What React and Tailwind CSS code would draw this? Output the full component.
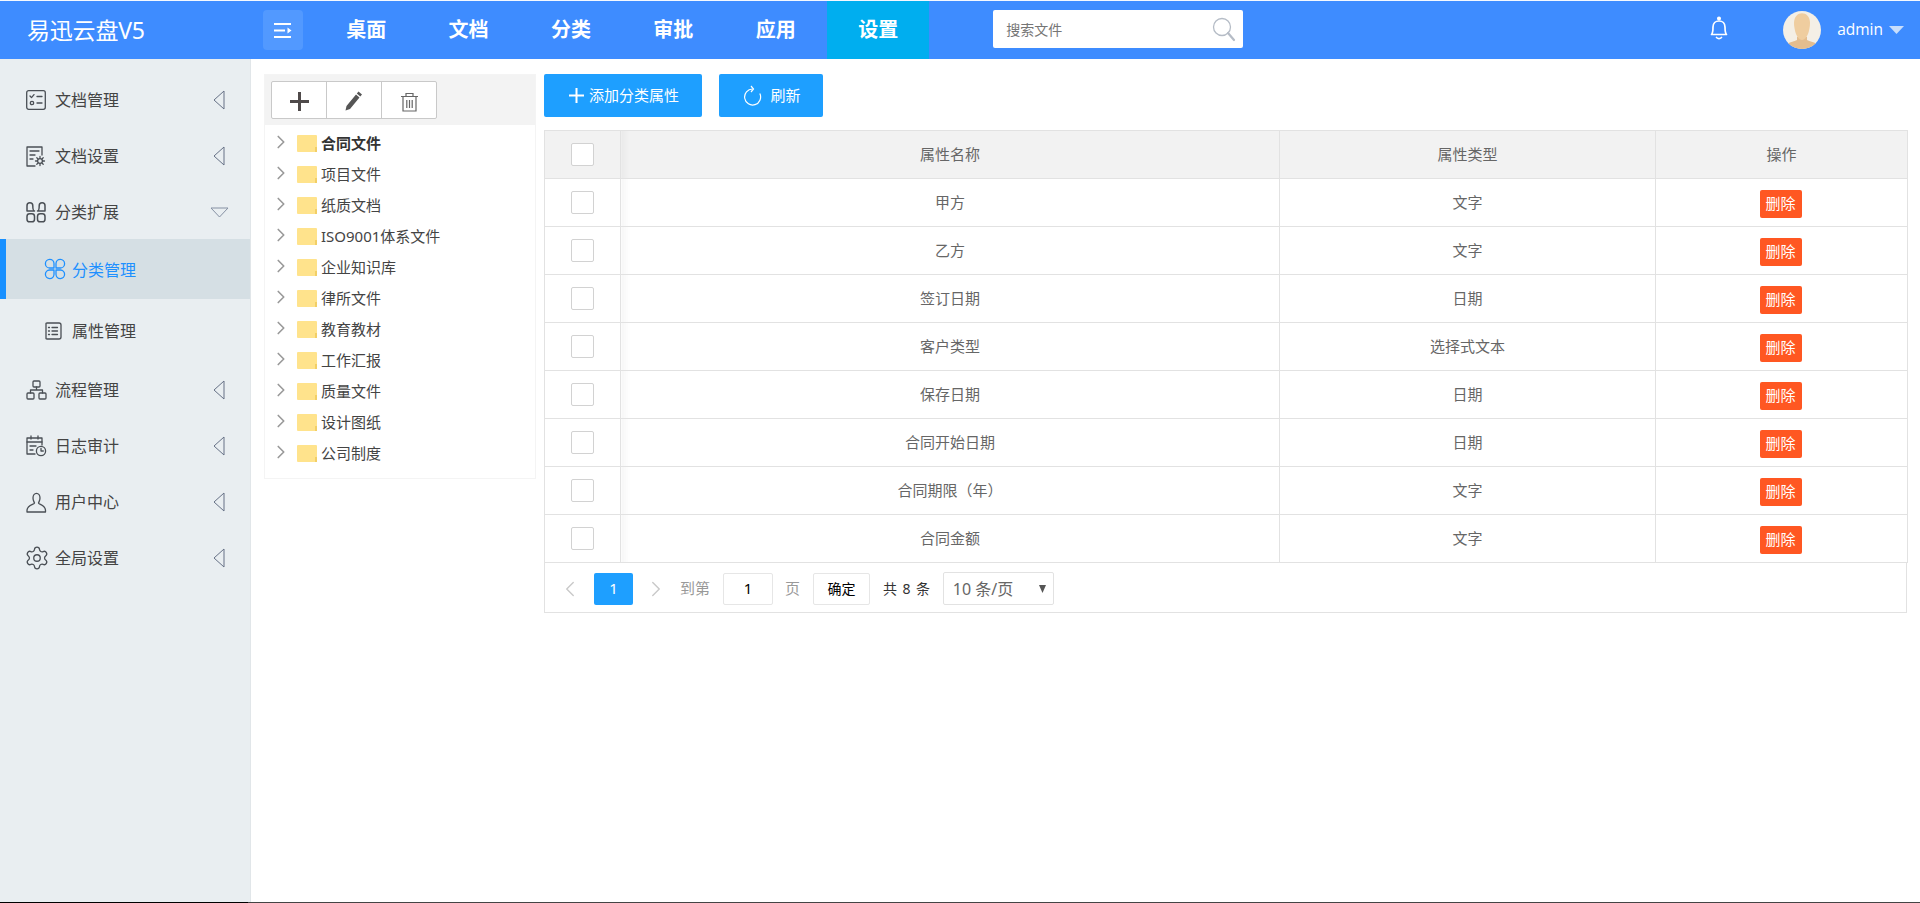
import React from "react";
import { ChevronRight, ChevronLeft, Settings } from "lucide-react";

const FONT = "font-['Noto_Sans','Noto_Sans_CJK_SC',sans-serif]";

const stroke = { fill: "none", stroke: "currentColor", strokeWidth: 1.3, strokeLinecap: "round", strokeLinejoin: "round" };

const IconChecklist = () => (
  <svg width="20" height="20" viewBox="0 0 20 20" {...stroke}>
    <rect x="0.7" y="0.7" width="18.6" height="18.6" rx="2" />
    <path d="M4 6l1.5 1.6L8 4.6M11 6.5h5M11 13h5" />
    <circle cx="6" cy="13" r="1.7" />
  </svg>
);
const IconDocGear = () => (
  <svg width="20" height="21" viewBox="0 0 20 21" {...stroke}>
    <path d="M9 20H1V1h15v8" />
    <path d="M4 5h9M4 9h5M4 13h3" />
    <circle cx="14" cy="15" r="2.4" />
    <path d="M14 10.5v1.6M14 17.9v1.6M9.5 15h1.6M16.9 15h1.6M10.8 11.8l1.1 1.1M16.1 17.1l1.1 1.1M10.8 18.2l1.1-1.1M16.1 12.9l1.1-1.1" />
  </svg>
);
const IconApps = () => (
  <svg width="20" height="21" viewBox="0 0 20 21" {...stroke} strokeWidth="1.5">
    <path d="M1 9V3.700a2.900 2.900 0 0 1 5.800 0c0 2.800.6 5.300 1.700 5.300z" />
    <path d="M19 9V3.700a2.900 2.900 0 0 0-5.800 0c0 2.800-.6 5.300-1.700 5.300z" />
    <rect x="1" y="11.800" width="7.500" height="8" rx="2.600" />
    <rect x="11.500" y="11.800" width="7.500" height="8" rx="2.600" />
  </svg>
);
const IconClover = () => (
  <svg width="22" height="22" viewBox="0 0 22 22" {...stroke}>
    <path d="M10 10H5.500a4.300 4.300 0 1 1 4.500-4.500z" />
    <path d="M12 10h4.500A4.300 4.300 0 1 0 12 5.500z" />
    <path d="M10 12H5.500a4.300 4.300 0 1 0 4.500 4.500z" />
    <path d="M12 12h4.500A4.300 4.300 0 1 1 12 16.500z" />
  </svg>
);
const IconList = () => (
  <svg width="18" height="18" viewBox="0 0 18 18" {...stroke}>
    <path d="M3 1h12a2 2 0 0 1 2 2v12a2 2 0 0 1-2 2H3a2 2 0 0 1-1-.3V1.300A2 2 0 0 1 3 1z" />
    <path d="M4.500 5.500h1M8 5.500h5.500M4.500 9h1M8 9h5.500M4.500 12.500h1M8 12.500h5.500" />
  </svg>
);
const IconOrg = () => (
  <svg width="21" height="20" viewBox="0 0 21 20" {...stroke}>
    <rect x="7" y="1" width="7" height="6" rx="1" />
    <rect x="1" y="13" width="7" height="6" rx="1" />
    <rect x="13" y="13" width="7" height="6" rx="1" />
    <path d="M10.500 7v3M4.500 13v-3h12v3" />
  </svg>
);
const IconLog = () => (
  <svg width="21" height="22" viewBox="0 0 21 22" {...stroke}>
    <path d="M9 19H1V3h15v7" />
    <path d="M1 7h15M5 1v3M12 1v3M4 11h6M4 15h3" />
    <circle cx="15" cy="16" r="4.600" />
    <path d="M15 13.500V16h2.300" />
  </svg>
);
const IconUser = () => (
  <svg width="21" height="21" viewBox="0 0 21 21" {...stroke}>
    <path d="M7 6a3.500 4.700 0 1 1 7 0c0 2.200-1 3.600-1.500 5 0 1.500 7 2 7 7.500V20H1v-1.500C1 13 8.500 12.500 8.500 11 8 9.600 7 8.200 7 6z" />
  </svg>
);
const TriLeft = () => (
  <svg width="12" height="20" viewBox="0 0 12 20" fill="none" stroke="#667186" strokeWidth="1">
    <path d="M11 1v18L1 10z" />
  </svg>
);
const TriDown = () => (
  <svg width="19" height="11" viewBox="0 0 19 11" fill="none" stroke="#8590a3" strokeWidth="1">
    <path d="M1 1h17l-8.500 9z" />
  </svg>
);

const menu1 = [
  { t: "文档管理", i: <IconChecklist /> },
  { t: "文档设置", i: <IconDocGear /> },
  { t: "分类扩展", i: <IconApps />, open: true },
];
const menu2 = [
  { t: "流程管理", i: <IconOrg /> },
  { t: "日志审计", i: <IconLog /> },
  { t: "用户中心", i: <IconUser /> },
  { t: "全局设置", i: <Settings size={26} strokeWidth={1.2} className="-ml-[2px]" /> },
];

function MenuRow({ t, i, open }) {
  return (
    <div className="flex h-[56px] items-center pl-[26px] text-[#444]">
      <span className="flex w-[29px] items-center text-[#4a4f55]">{i}</span>
      <span className="w-[158px] text-[16px] leading-none">{t}</span>
      {open ? <span className="-ml-[3px] flex"><TriDown /></span> : <TriLeft />}
    </div>
  );
}

function Sidebar() {
  return (
    <aside className="w-[251px] shrink-0 border-r border-[#e1e6e9] bg-[#e9eef1] pt-[13px]">
      {menu1.map((m) => <MenuRow key={m.t} {...m} />)}
      <div className="-mt-px flex h-[60px] items-center border-l-[6px] border-[#1890ff] bg-[#d5dfe4] pl-[38px] text-[#1e90ff]">
        <span className="flex w-[28px]"><IconClover /></span>
        <span className="pt-[2px] text-[16px] leading-none">分类管理</span>
      </div>
      <div className="flex h-[63px] items-center pl-[44px] text-[#444]">
        <span className="flex w-[28px] text-[#4a4f55]"><IconList /></span>
        <span className="pt-[1px] text-[16px] leading-none">属性管理</span>
      </div>
      {menu2.map((m) => <MenuRow key={m.t} {...m} />)}
    </aside>
  );
}

const navs = ["桌面", "文档", "分类", "审批", "应用", "设置"];

function Avatar() {
  return (
    <svg width="38" height="38" viewBox="0 0 38 38" className="rounded-full">
      <rect width="38" height="38" fill="#f4efe6" />
      <path d="M0 38c0-6 8-6 14-9v-3h10v3c6 3 14 3 14 9z" fill="#e4bd8f" />
      <path d="M11 12c0-13 16-13 16 0 0 7-3 17-8 17s-8-10-8-17z" fill="#efcd9f" />
    </svg>
  );
}

function Header() {
  return (
    <header className="flex h-[58px] shrink-0 items-center bg-[#3e8cff] text-white">
      <div className="w-[263px] shrink-0 pl-[27px] text-[23px] leading-none tracking-[-0.2px]">易迅云盘V5</div>
      <button className="flex h-[40px] w-[40px] shrink-0 items-center justify-center rounded-[4px] bg-[#5299ff]">
        <svg width="20" height="15" viewBox="0 0 20 15" fill="white">
          <rect x="1" y="0" width="17" height="2" />
          <rect x="1" y="6.500" width="11" height="2" />
          <rect x="1" y="13" width="17" height="2" />
          <path d="M14.500 4.500l4 3-4 3z" />
        </svg>
      </button>
      <nav className="ml-[12px] flex h-full shrink-0">
        {navs.map((n) => (
          <a key={n} className={`flex h-full w-[102.4px] items-center justify-center text-[20px] font-bold ${n === "设置" ? "bg-[#00aeef]" : ""}`}>
            {n}
          </a>
        ))}
      </nav>
      <div className="mb-[2px] ml-[64px] flex h-[38px] w-[250px] shrink-0 items-center justify-between rounded-[2px] bg-white pl-[13px] pr-[7px] text-[14px] text-[#757575]">
        <span>搜索文件</span>
        <svg width="24" height="25" viewBox="0 0 24 25" fill="none" stroke="#b5bcc6">
          <circle cx="10" cy="10" r="8.500" strokeWidth="1.300" />
          <path d="M16 16l6 7" strokeWidth="2.200" strokeLinecap="round" />
        </svg>
      </div>
      <div className="ml-auto flex items-center pr-[16px]">
        <svg width="18" height="24" viewBox="0 0 18 24" fill="none" stroke="white" strokeWidth="1.700" strokeLinejoin="round" strokeLinecap="round" className="-mt-[4px]">
          <path d="M1.500 18.500c1.500-1.500 1.500-3 1.500-7.500 0-3.500 2.500-6 6-6s6 2.500 6 6c0 4.500 0 6 1.500 7.500z" />
          <circle cx="9" cy="2.500" r="1.200" fill="white" />
          <path d="M6.500 21.500c1.500 1.500 3.500 1.500 5 0" />
        </svg>
        <div className="ml-[55px] flex"><Avatar /></div>
        <span className="ml-[16px] font-['Open_Sans',sans-serif] text-[15.5px] leading-none">admin</span>
        <svg width="15" height="8" viewBox="0 0 15 8" className="ml-[6px]"><path d="M0 0h15l-7.500 8z" fill="#c8defc" /></svg>
      </div>
    </header>
  );
}

const folders = ["合同文件", "项目文件", "纸质文档", "ISO9001体系文件", "企业知识库", "律所文件", "教育教材", "工作汇报", "质量文件", "设计图纸", "公司制度"];

function Folder() {
  return (
    <span className="flex h-[17px] w-[20px] shrink-0 items-end justify-end rounded-[1px] bg-[#ffe38c]">
      <span className="h-[5px] w-[2px] bg-[#f2cf66]" />
    </span>
  );
}

function TreePanel() {
  return (
    <section className="h-[405px] w-[272px] shrink-0 border border-[#f4f4f4]">
      <div className="flex h-[50px] items-start bg-[#f3f3f3] pl-[6px] pt-[6px]">
        <div className="flex h-[38px] w-[166px] rounded-[2px] border border-[#c9c9c9] bg-white">
          <button className="flex flex-1 items-center justify-center border-r border-[#c9c9c9]">
            <svg width="19" height="19" viewBox="0 0 19 19" className="mt-[3px]"><path d="M8 0h3v8h8v3h-8v8H8v-8H0V8h8z" fill="#4f4a4a" /></svg>
          </button>
          <button className="flex flex-1 items-center justify-center border-r border-[#c9c9c9]">
            <svg width="18" height="20" viewBox="0 0 18 20" className="mt-[2px]">
              <path d="M13.500 0.500l3.500 3-1.700 2-3.500-3zM11 3.500l3.500 3L5 18l-4.500 1.500L1.500 15z" fill="#555" />
            </svg>
          </button>
          <button className="flex flex-1 items-center justify-center">
            <svg width="19" height="20" viewBox="0 0 19 20" fill="none" stroke="#666" strokeWidth="1.200" className="mt-[3px]">
              <path d="M1 4.500h17M6 4V1.500h7V4M3 5v14h13V5M6.800 8v8M9.500 8v8M12.200 8v8" />
            </svg>
          </button>
        </div>
      </div>
      <ul className="pt-[3px]">
        {folders.map((f, idx) => (
          <li key={f} className="flex h-[31px] items-center pl-[5px]">
            <ChevronRight size={22} strokeWidth={1.800} className="-mt-[3px] shrink-0 text-[#999]" />
            <span className="ml-[5px]"><Folder /></span>
            <span className={`ml-[4px] text-[15px] leading-none ${idx === 0 ? "font-bold text-[#333]" : "text-[#444]"}`}>{f}</span>
          </li>
        ))}
      </ul>
    </section>
  );
}

const rows = [
  ["甲方", "文字"],
  ["乙方", "文字"],
  ["签订日期", "日期"],
  ["客户类型", "选择式文本"],
  ["保存日期", "日期"],
  ["合同开始日期", "日期"],
  ["合同期限（年）", "文字"],
  ["合同金额", "文字"],
];

function Check() {
  return <span className="mx-auto block h-[23px] w-[23px] rounded-[2px] border border-[#d2d2d2] bg-white" />;
}

function DataTable() {
  const shadow = "bg-[linear-gradient(to_right,rgba(0,0,0,0.03),transparent_9px)]";
  return (
    <table className="w-[1363px] table-fixed border-collapse text-center text-[15px] text-[#666]">
      <colgroup>
        <col className="w-[76px]" />
        <col className="w-[659px]" />
        <col className="w-[376px]" />
        <col className="w-[252px]" />
      </colgroup>
      <thead>
        <tr className="h-[48px] bg-[#f2f2f2]">
          <th className="border border-[#e2e2e2] font-normal"><Check /></th>
          <th className={`border border-[#e2e2e2] font-normal ${shadow}`}>属性名称</th>
          <th className="border border-[#e2e2e2] font-normal">属性类型</th>
          <th className="border border-[#e2e2e2] font-normal">操作</th>
        </tr>
      </thead>
      <tbody>
        {rows.map(([a, b]) => (
          <tr key={a} className="h-[48px]">
            <td className="border border-[#e2e2e2]"><Check /></td>
            <td className={`border border-[#e2e2e2] ${shadow}`}>{a}</td>
            <td className="border border-[#e2e2e2]">{b}</td>
            <td className="border border-[#e2e2e2]">
              <button className="mr-[2px] mt-[2px] h-[28px] w-[42px] rounded-[2px] bg-[#ff5722] text-[15px] leading-none text-white">删除</button>
            </td>
          </tr>
        ))}
      </tbody>
    </table>
  );
}

function Pager() {
  return (
    <div className="flex h-[50px] w-[1363px] items-center border border-t-0 border-[#e2e2e2] pl-[12px] pt-[2px] text-[15px]">
      <ChevronLeft size={26} strokeWidth={1.300} className="text-[#c9c9c9]" />
      <span className="ml-[11px] flex h-[32px] w-[39px] items-center justify-center rounded-[2px] bg-[#1e9fff] text-white">1</span>
      <ChevronRight size={26} strokeWidth={1.300} className="ml-[10px] text-[#c9c9c9]" />
      <span className="ml-[11px] text-[#999]">到第</span>
      <span className="ml-[13px] flex h-[32px] w-[50px] items-center justify-center rounded-[2px] border border-[#e6e6e6] text-black">1</span>
      <span className="ml-[12px] text-[#999]">页</span>
      <span className="ml-[13px] flex h-[32px] w-[57px] items-center justify-center rounded-[2px] border border-[#e6e6e6] text-[14px] text-black">确定</span>
      <span className="ml-[13px] text-[14px] text-[#333] tracking-[0.9px]">共 8 条</span>
      <span className="ml-[12px] flex h-[33px] w-[111px] items-center justify-between rounded-[2px] border border-[#e2e2e2] pl-[9px] pr-[7px] text-[16px] text-[#666]">
        <span>10 条/页</span>
        <svg width="7" height="8" viewBox="0 0 7 8"><path d="M0 0h7L3.500 8z" fill="#555" /></svg>
      </span>
    </div>
  );
}

function Blue({ children }) {
  return (
    <button className="flex h-[43px] items-center justify-center rounded-[2px] bg-[#1e9fff] text-[15px] text-white">{children}</button>
  );
}

export default function App() {
  return (
    <div className={`flex h-screen flex-col overflow-hidden bg-white ${FONT}`}>
      <div className="h-px shrink-0 bg-[#f4f8ff]" />
      <Header />
      <div className="flex min-h-0 flex-1">
        <Sidebar />
        <main className="flex flex-1 gap-[8px] pl-[13px] pt-[15px]">
          <TreePanel />
          <div>
            <div className="mb-[13px] flex gap-[17px]">
              <Blue>
                <span className="flex w-[158px] items-center justify-center gap-[5px] pl-[2px]">
                  <svg width="15" height="15" viewBox="0 0 15 15"><path d="M6.500 0h2v6.500H15v2H8.500V15h-2V8.500H0v-2h6.500z" fill="white" /></svg>
                  添加分类属性
                </span>
              </Blue>
              <Blue>
                <span className="flex w-[104px] items-center justify-center gap-[8px] pl-[2px]">
                  <svg width="19" height="22" viewBox="0 0 19 22" fill="none" stroke="white" strokeWidth="1.200">
                    <path d="M9.500 4A8 8 0 1 0 16.800 8.500" />
                    <path d="M8 1l2.500 3L8 7" />
                  </svg>
                  刷新
                </span>
              </Blue>
            </div>
            <DataTable />
            <Pager />
          </div>
        </main>
      </div>
      <div className="flex h-px shrink-0">
        <div className="w-[248px] bg-black" />
        <div className="flex-1 bg-[#444]" />
      </div>
    </div>
  );
}
